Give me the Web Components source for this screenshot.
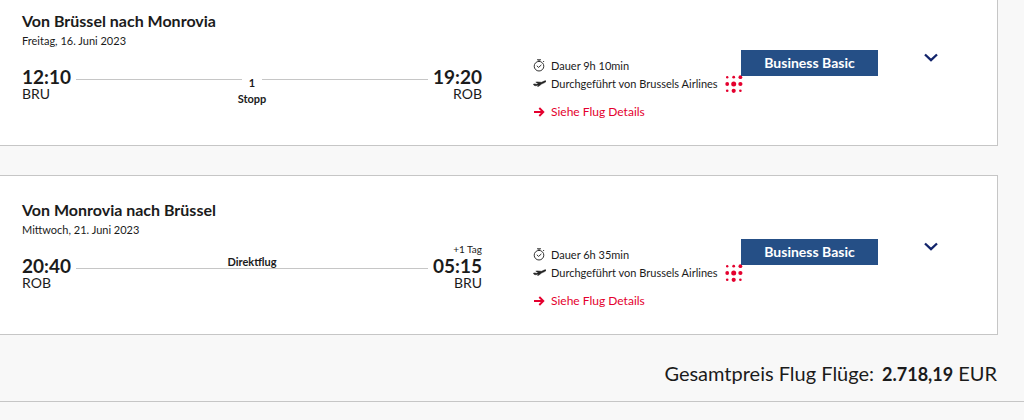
<!DOCTYPE html>
<html lang="de">
<head>
<meta charset="utf-8">
<meta name="viewport" content="width=device-width, initial-scale=1">
<title>Flugübersicht</title>
<style>
  body { margin: 0; background: #f8f8f8; color: #1b1b1b; font-family: Lato, "Open Sans", sans-serif; }
</style>
</head>
<body>
<flight-summary>
  <flight-card continued heading="Von Brüssel nach Monrovia" date="Freitag, 16. Juni 2023" duration="Dauer 9h 10min" fare="Business Basic">
    <flight-route slot="route" dep="12:10" from="BRU" arr="19:20" to="ROB" stops="1"></flight-route>
  </flight-card>
  <flight-card heading="Von Monrovia nach Brüssel" date="Mittwoch, 21. Juni 2023" duration="Dauer 6h 35min" fare="Business Basic">
    <flight-route slot="route" dep="20:40" from="ROB" arr="05:15" to="BRU" note="+1 Tag"></flight-route>
  </flight-card>
  <price-total slot="total" label="Gesamtpreis Flug Flüge:" amount="2.718,19" currency="EUR"></price-total>
</flight-summary>

<script>
class FlightSummary extends HTMLElement {
  constructor() {
    super();
    this.attachShadow({ mode: 'open' }).innerHTML = `
      <style>
        :host { display: block; }
        main { display: grid; gap: 29px; padding-right: 26px; }
      </style>
      <main><slot></slot></main>
      <slot name="total"></slot>`;
  }
}

class FlightRoute extends HTMLElement {
  connectedCallback() {
    const a = n => this.getAttribute(n) || '';
    const track = this.hasAttribute('stops')
      ? `<i></i><span class="stop"><b>${a('stops')}</b><b>Stopp</b></span><i></i>`
      : `<i></i><b class="direct">Direktflug</b>`;
    this.attachShadow({ mode: 'open' }).innerHTML = `
      <style>
        :host { display: flex; font-size: 11px; line-height: 16px; }
        .end { display: grid; grid-template-rows: 15px 18px 17px; }
        .end:last-child { text-align: right; }
        .note { font-size: 10px; line-height: 14px; }
        time { font-size: 19px; line-height: 18px; font-weight: 700; }
        .code { font-size: 14px; }
        .track { flex: 1; display: flex; position: relative; margin: 0 5px; padding-top: 26px; }
        i { flex: 1; height: 1px; background: #c6c6c6; }
        .stop { width: 20px; display: flex; flex-direction: column; align-items: center; margin-top: -4px; }
        .direct { position: absolute; left: 0; right: 0; top: 12px; text-align: center; }
      </style>
      <div class="end"><span class="note"></span><time>${a('dep')}</time><span class="code">${a('from')}</span></div>
      <div class="track">${track}</div>
      <div class="end"><span class="note">${a('note')}</span><time>${a('arr')}</time><span class="code">${a('to')}</span></div>`;
  }
}

class FlightIcon extends HTMLElement {
  connectedCallback() {
    const art = {
      clock: `<svg width="13" height="14" viewBox="1 0 13 14" fill="none" stroke="#333"><circle cx="7" cy="7.2" r="4.8"/><path d="M5 .8h4M7 .8v1.500M11.100 2l1 1M4.800 6.800l1.800 1.600 2.800-2.500"/></svg>`,
      plane: `<svg width="13" height="14" viewBox="0 0 13 14" fill="#222" stroke="#222" stroke-width=".5" stroke-linejoin="round"><path d="M.2 7.400l1.200-.5 2.300.4 1.600-.7-2.500-1.400 1.200-.3 4.500.4 2.700-1.200c1-.4 1.700-.4 1.800-.1.100.5-.4 1.100-1.300 1.600L8.500 7.100 5.800 9.200l-1.200.3.8-1.500-2.300.7c-.8.200-1.500 0-2.100-.400z"/></svg>`,
      arrow: `<svg width="13" height="14" viewBox="1 0 13 14" fill="none" stroke="#e4002e" stroke-width="1.900"><path d="M2 7h9M7.300 3l4 4-4 4"/></svg>`,
      chevron: `<svg width="16" height="12" viewBox="0 0 16 12" fill="none" stroke="#12246b" stroke-width="2.300"><path d="M2 2.500l6 5.700 6-5.700"/></svg>`,
      dots: `<svg width="20" height="18" viewBox="-2 0 20 18" fill="#e4002e"><circle cx="2.200" cy="2.200" r="1.200"/><circle cx="8.700" cy="2.200" r="1.400"/><circle cx="15.400" cy="2.200" r="1.900"/><circle cx="2.200" cy="9" r="1.900"/><circle cx="8.700" cy="9" r="2.500"/><circle cx="15.400" cy="9" r="2.100"/><circle cx="2.200" cy="15.800" r="1.300"/><circle cx="8.700" cy="15.800" r="2.100"/><circle cx="15.400" cy="15.800" r="1.300"/></svg>`
    };
    this.attachShadow({ mode: 'open' }).innerHTML = `
      <style>:host { display: inline-flex; flex: none; } svg { display: block; }</style>${art[this.getAttribute('name')]}`;
  }
}

class FlightCard extends HTMLElement {
  connectedCallback() {
    const a = n => this.getAttribute(n) || '';
    this.attachShadow({ mode: 'open' }).innerHTML = `
      <style>
        :host {
          display: grid; grid-template-columns: minmax(0, 1fr) 208px 137px 106px;
          align-items: end; padding: 24px 13px 24px 22px; background: #fff;
          border: 1px solid #c6c6c6; border-left: 0;
        }
        :host([continued]) { border-top: 0; padding-top: 11px; }
        .main { align-self: start; margin-right: 51px; }
        h2 { margin: 0 0 2px; font-size: 16px; line-height: 20px; font-weight: 700; }
        p { margin: 0; }
        .date { font-size: 11px; line-height: 16px; margin-bottom: 4px; }
        .info { margin-top: 46px; }
        .row { display: flex; align-items: center; gap: 5px; font-size: 11px; line-height: 18px; white-space: nowrap; }
        a.row { color: #e4002e; text-decoration: none; font-size: 12px; margin-top: 10px; }
        .fare {
          margin-bottom: 45px; background: #254f86; color: #fff; text-align: center;
          font-size: 14px; line-height: 26px; font-weight: 700;
        }
        button { justify-self: center; margin-bottom: 57px; padding: 0; border: 0; background: none; cursor: pointer; }
        button flight-icon { display: flex; }
      </style>
      <div class="main">
        <h2>${a('heading')}</h2>
        <p class="date">${a('date')}</p>
        <slot name="route"></slot>
      </div>
      <div class="info">
        <p class="row"><flight-icon name="clock"></flight-icon>${a('duration')}</p>
        <p class="row"><flight-icon name="plane"></flight-icon>Durchgeführt von Brussels Airlines<flight-icon name="dots"></flight-icon></p>
        <a class="row" href="#details"><flight-icon name="arrow"></flight-icon>Siehe Flug Details</a>
      </div>
      <div class="fare">${a('fare')}</div>
      <button type="button" aria-label="Aufklappen"><flight-icon name="chevron"></flight-icon></button>`;
  }
}

class PriceTotal extends HTMLElement {
  connectedCallback() {
    const a = n => this.getAttribute(n) || '';
    this.attachShadow({ mode: 'open' }).innerHTML = `
      <style>
        :host { display: flex; align-items: baseline; justify-content: flex-end; padding: 24px 27px 14px; border-bottom: 1px solid #c6c6c6; font-size: 20px; line-height: 28px; }
        b { margin: 0 5px 0 8px; font-size: 18px; line-height: 26px; }
      </style>
      <span>${a('label')}</span><b>${a('amount')}</b><span>${a('currency')}</span>`;
  }
}

customElements.define('flight-icon', FlightIcon);
customElements.define('flight-route', FlightRoute);
customElements.define('flight-card', FlightCard);
customElements.define('price-total', PriceTotal);
customElements.define('flight-summary', FlightSummary);
</script>
</body>
</html>
